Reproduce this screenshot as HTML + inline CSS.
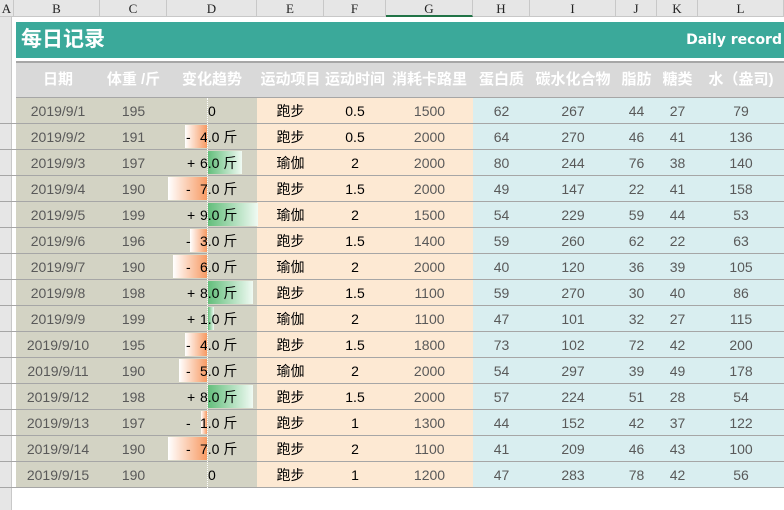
<html><head><style>
body{margin:0;width:784px;height:510px;overflow:hidden;background:#fff;font-family:"Liberation Sans","Noto Sans CJK SC",sans-serif;position:relative}
.a{position:absolute}
.ch{top:0;height:17px;background:#e6e6e6;border-right:1px solid #c8c8c8;border-bottom:1px solid #c8c8c8;box-sizing:border-box;font-family:"Liberation Serif",serif;font-size:13px;text-align:center;line-height:17px;color:#222}
.c{position:absolute;text-align:center;font-size:14px;line-height:26px;height:26px}
.h{position:absolute;text-align:center;font-size:15px;font-weight:bold;color:#fff;top:62px;height:36px;line-height:36px;white-space:nowrap}
</style></head><body>
<div class="a ch" style="left:0;width:14px">A</div>
<div class="a ch" style="left:14px;width:86px">B</div>
<div class="a ch" style="left:100px;width:67px">C</div>
<div class="a ch" style="left:167px;width:90px">D</div>
<div class="a ch" style="left:257px;width:67px">E</div>
<div class="a ch" style="left:324px;width:62px">F</div>
<div class="a ch" style="left:386px;width:87px;border-bottom:2px solid #217346">G</div>
<div class="a ch" style="left:473px;width:57px">H</div>
<div class="a ch" style="left:530px;width:86px">I</div>
<div class="a ch" style="left:616px;width:41px">J</div>
<div class="a ch" style="left:657px;width:41px">K</div>
<div class="a ch" style="left:698px;width:86px">L</div>
<div class="a" style="left:0;top:17px;width:11px;height:493px;background:#e6e6e6;border-right:1px solid #c8c8c8"></div>
<div class="a" style="left:16px;top:22px;width:768px;height:36px;background:#3ba99a"></div>
<div class="a" style="left:21px;top:22px;line-height:36px;font-size:21px;font-weight:bold;color:#fff">每日记录</div>
<div class="a" style="right:2px;top:22px;line-height:36px;font-size:14px;font-weight:bold;color:#fff;font-family:'DejaVu Sans',sans-serif">Daily record</div>
<div class="a" style="left:16px;top:61px;width:768px;height:37px;background:#d9d9d9;border-top:2px solid #a6a6a6;box-sizing:border-box;border-bottom:1px solid #a6a6a6"></div>
<div class="h" style="left:16px;width:84px">日期</div>
<div class="h" style="left:100px;width:67px">体重 /斤</div>
<div class="h" style="left:167px;width:90px">变化趋势</div>
<div class="h" style="left:257px;width:67px">运动项目</div>
<div class="h" style="left:324px;width:62px">运动时间</div>
<div class="h" style="left:386px;width:87px">消耗卡路里</div>
<div class="h" style="left:473px;width:57px">蛋白质</div>
<div class="h" style="left:530px;width:86px">碳水化合物</div>
<div class="h" style="left:616px;width:41px">脂肪</div>
<div class="h" style="left:657px;width:41px">糖类</div>
<div class="h" style="left:698px;width:86px">水（盎司)</div>
<div class="a" style="left:16px;top:98px;width:241px;height:390px;background:#d3d3c4"></div>
<div class="a" style="left:257px;top:98px;width:216px;height:390px;background:#fde9d3"></div>
<div class="a" style="left:473px;top:98px;width:311px;height:390px;background:#d9eef0"></div>
<div id="rows"></div>
<div class="a" style="left:207px;top:98px;height:390px;border-left:1px dotted #fff"></div>
<script>
var d=[["2019/9/1",195,0,"跑步","0.5",1500,62,267,44,27,79],
["2019/9/2",191,-4,"跑步","0.5",2000,64,270,46,41,136],
["2019/9/3",197,6,"瑜伽","2",2000,80,244,76,38,140],
["2019/9/4",190,-7,"跑步","1.5",2000,49,147,22,41,158],
["2019/9/5",199,9,"瑜伽","2",1500,54,229,59,44,53],
["2019/9/6",196,-3,"跑步","1.5",1400,59,260,62,22,63],
["2019/9/7",190,-6,"瑜伽","2",2000,40,120,36,39,105],
["2019/9/8",198,8,"跑步","1.5",1100,59,270,30,40,86],
["2019/9/9",199,1,"瑜伽","2",1100,47,101,32,27,115],
["2019/9/10",195,-4,"跑步","1.5",1800,73,102,72,42,200],
["2019/9/11",190,-5,"瑜伽","2",2000,54,297,39,49,178],
["2019/9/12",198,8,"跑步","1.5",2000,57,224,51,28,54],
["2019/9/13",197,-1,"跑步","1",1300,44,152,42,37,122],
["2019/9/14",190,-7,"跑步","2",1100,41,209,46,43,100],
["2019/9/15",190,0,"跑步","1",1200,47,283,78,42,56]];
var h="",g="#595959";
d.forEach(function(r,i){var y=98+i*26;
h+='<div class="a" style="left:0;top:'+(y+25)+'px;width:784px;height:1px;background:#a6a6a6"></div>';
h+='<div class="c" style="left:16px;width:84px;top:'+y+'px;color:'+g+'">'+r[0]+'</div>';
h+='<div class="c" style="left:100px;width:67px;top:'+y+'px;color:'+g+'">'+r[1]+'</div>';
var v=r[2],w=Math.abs(v)*5.6;
if(v<0)h+='<div class="a" style="left:'+(207-w)+'px;top:'+(y+1)+'px;width:'+w+'px;height:23px;background:linear-gradient(to right,#fff,#f79a63)"></div>';
if(v>0)h+='<div class="a" style="left:208px;top:'+(y+1)+'px;width:'+w+'px;height:23px;background:linear-gradient(to right,#63be7b,#f0faf3)"></div>';
if(v==0)h+='<div class="c" style="left:208px;top:'+y+'px">0</div>';
else h+='<div class="c" style="left:'+(v<0?186:187)+'px;top:'+y+'px">'+(v<0?'-':'+')+'</div><div class="c" style="left:200px;top:'+y+'px">'+Math.abs(v).toFixed(1)+' 斤</div>';
h+='<div class="c" style="left:257px;width:67px;top:'+y+'px">'+r[3]+'</div>';
h+='<div class="c" style="left:324px;width:62px;top:'+y+'px">'+r[4]+'</div>';
h+='<div class="c" style="left:386px;width:87px;top:'+y+'px;color:'+g+'">'+r[5]+'</div>';
var L=[[473,57],[530,86],[616,41],[657,41],[698,86]];
L.forEach(function(c,j){h+='<div class="c" style="left:'+c[0]+'px;width:'+c[1]+'px;top:'+y+'px;color:'+g+'">'+r[6+j]+'</div>';});
});
document.getElementById('rows').outerHTML=h;
</script>
</body></html>
